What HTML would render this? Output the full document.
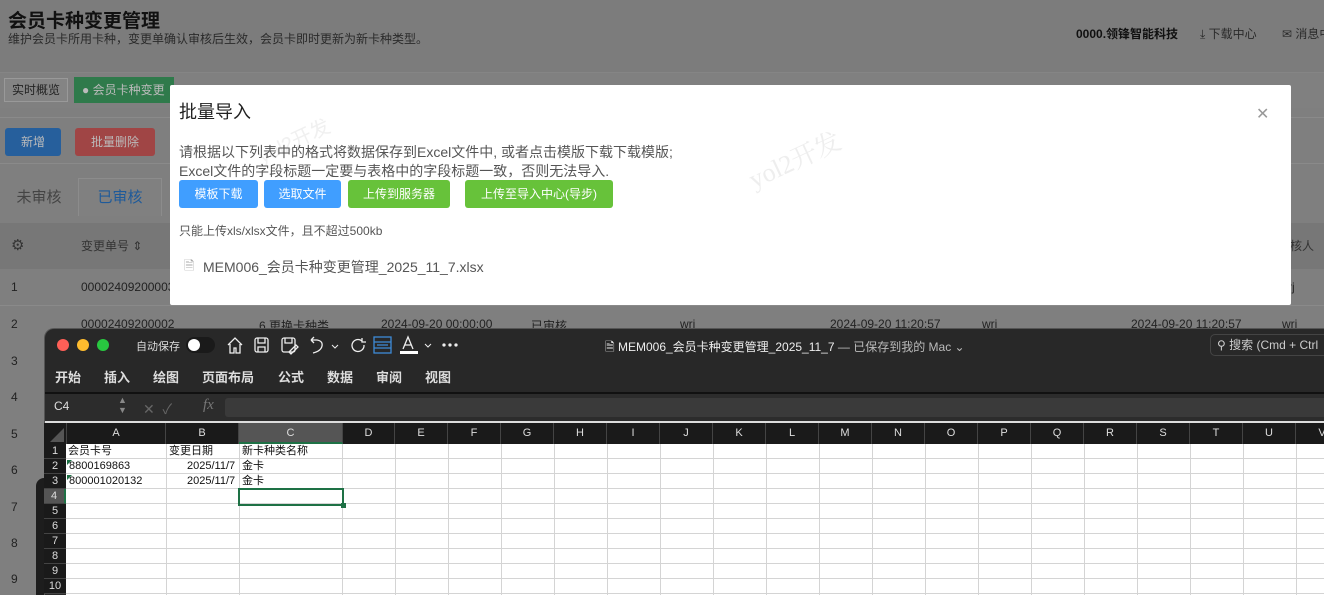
<!DOCTYPE html>
<html><head><meta charset="utf-8"><style>
*{margin:0;padding:0;box-sizing:border-box}
html,body{width:1324px;height:595px;overflow:hidden}
body{background:#7f7f7f;font-family:"Liberation Sans","Noto Sans CJK SC",sans-serif;position:relative;color:#111}
.a{position:absolute;white-space:nowrap}
.btn{position:absolute;color:#fff;font-size:12px;text-align:center;border-radius:3px}
.col{position:absolute;top:423px;height:21px;border-right:1px solid #444;color:#ddd;font-size:11px;text-align:center;line-height:21px}
.rh{position:absolute;left:44px;width:22px;height:15px;color:#ddd;font-size:11px;text-align:center;line-height:15px;background:#1a1a1a;border-bottom:1px solid #444}
.c{position:absolute;font-size:11px;line-height:15px;height:15px;color:#111;white-space:nowrap}
</style></head><body>
<!-- header -->
<div class="a" style="left:0;top:0;width:1324px;height:72px;background:#7c7c7c"></div>
<div class="a" style="left:8px;top:6px;font-size:19px;font-weight:bold;color:#111">会员卡种变更管理</div>
<div class="a" style="left:8px;top:30px;font-size:12px;color:#2a2a2a">维护会员卡所用卡种，变更单确认审核后生效，会员卡即时更新为新卡种类型。</div>
<div class="a" style="left:1076px;top:25px;font-size:12px;font-weight:bold;color:#111">0000.领锋智能科技</div>
<div class="a" style="left:1200px;top:25px;font-size:12px;color:#2a2a2a">⤓ 下载中心</div>
<div class="a" style="left:1282px;top:25px;font-size:12px;color:#2a2a2a">✉ 消息中心</div>
<div class="a" style="left:0;top:72px;width:1324px;height:36px;background:#808080;border-top:1px solid #858585"></div>
<div class="a" style="left:4px;top:78px;width:64px;height:24px;border:1px solid #999;background:#848484;font-size:12px;line-height:22px;text-align:center;color:#222">实时概览</div>
<div class="a" style="left:74px;top:77px;width:100px;height:26px;background:#2f7a4b;font-size:12px;line-height:26px;color:#bbb;padding-left:8px">● 会员卡种变更</div>
<div class="btn" style="left:5px;top:128px;width:56px;height:28px;line-height:28px;background:#265f9c;color:#bbb">新增</div>
<div class="btn" style="left:75px;top:128px;width:80px;height:28px;line-height:28px;background:#a04545;color:#bbb">批量删除</div>
<div class="a" style="left:0;top:117px;width:1324px;height:1px;background:#8a8a8a"></div>
<div class="a" style="left:0;top:163px;width:1324px;height:1px;background:#8a8a8a"></div>
<div class="a" style="left:0;top:180px;width:78px;height:36px;font-size:15px;line-height:36px;text-align:center;color:#444">未审核</div>
<div class="a" style="left:78px;top:178px;width:84px;height:38px;border:1px solid #8c8c8c;border-bottom:none;background:#808080;font-size:15px;line-height:38px;text-align:center;color:#1e5a9a">已审核</div>
<div class="a" style="left:0;top:223px;width:1324px;height:46px;background:#777"></div>
<div class="a" style="left:11px;top:236px;font-size:15px;color:#333">⚙</div>
<div class="a" style="left:81px;top:237px;font-size:12px;color:#333">变更单号 ⇕</div>
<div class="a" style="left:1278px;top:237px;font-size:12px;color:#333">审核人</div>
<div class="a" style="left:0;top:305px;width:1324px;height:1px;background:#8a8a8a"></div>
<div class="a" style="left:11px;top:280px;font-size:12px;color:#222">1</div>
<div class="a" style="left:81px;top:280px;font-size:12px;color:#222">00002409200003</div>
<div class="a" style="left:1288px;top:280px;font-size:12px;color:#222">rj</div>
<div class="a" style="left:11px;top:317px;font-size:12px;color:#222">2</div>
<div class="a" style="left:81px;top:317px;font-size:12px;color:#222">00002409200002</div>
<div class="a" style="left:259px;top:317px;font-size:12px;color:#222">6.更换卡种类</div>
<div class="a" style="left:381px;top:317px;font-size:12px;color:#222">2024-09-20 00:00:00</div>
<div class="a" style="left:531px;top:317px;font-size:12px;color:#222">已审核</div>
<div class="a" style="left:680px;top:317px;font-size:12px;color:#222">wri</div>
<div class="a" style="left:830px;top:317px;font-size:12px;color:#222">2024-09-20 11:20:57</div>
<div class="a" style="left:982px;top:317px;font-size:12px;color:#222">wri</div>
<div class="a" style="left:1131px;top:317px;font-size:12px;color:#222">2024-09-20 11:20:57</div>
<div class="a" style="left:1282px;top:317px;font-size:12px;color:#222">wri</div>
<div class="a" style="left:11px;top:354px;font-size:12px;color:#222">3</div>
<div class="a" style="left:11px;top:390px;font-size:12px;color:#222">4</div>
<div class="a" style="left:11px;top:427px;font-size:12px;color:#222">5</div>
<div class="a" style="left:11px;top:463px;font-size:12px;color:#222">6</div>
<div class="a" style="left:11px;top:500px;font-size:12px;color:#222">7</div>
<div class="a" style="left:11px;top:536px;font-size:12px;color:#222">8</div>
<div class="a" style="left:11px;top:572px;font-size:12px;color:#222">9</div>
<!-- modal -->
<div class="a" style="left:170px;top:85px;width:1121px;height:220px;background:#fff;border-radius:2px"></div>
<div class="a" style="left:179px;top:98px;font-size:18px;color:#222">批量导入</div>
<div class="a" style="left:1256px;top:104px;font-size:16px;color:#999">✕</div>
<div class="a" style="left:255px;top:125px;font-size:20px;color:#f0f0f0;transform:rotate(-25deg)">yol2开发</div>
<div class="a" style="left:745px;top:140px;font-size:26px;color:#eee;font-family:'Liberation Serif','Noto Serif CJK SC',serif;transform:rotate(-25deg)">yol2开发</div>
<div class="a" style="left:179px;top:142px;font-size:14px;color:#555">请根据以下列表中的格式将数据保存到Excel文件中, 或者点击模版下载下载模版;</div>
<div class="a" style="left:179px;top:161px;font-size:14px;color:#555">Excel文件的字段标题一定要与表格中的字段标题一致，否则无法导入.</div>
<div class="btn" style="left:179px;top:180px;width:79px;height:28px;line-height:28px;background:#409eff">模板下载</div>
<div class="btn" style="left:264px;top:180px;width:77px;height:28px;line-height:28px;background:#409eff">选取文件</div>
<div class="btn" style="left:348px;top:180px;width:102px;height:28px;line-height:28px;background:#67c23a">上传到服务器</div>
<div class="btn" style="left:465px;top:180px;width:148px;height:28px;line-height:28px;background:#67c23a">上传至导入中心(导步)</div>
<div class="a" style="left:179px;top:222px;font-size:12px;color:#555">只能上传xls/xlsx文件，且不超过500kb</div>
<div class="a" style="left:184px;top:257px;font-size:13px;color:#aaa">🗎</div>
<div class="a" style="left:203px;top:257px;font-size:14px;color:#555">MEM006_会员卡种变更管理_2025_11_7.xlsx</div>
<!-- back window -->
<div class="a" style="left:36px;top:478px;width:30px;height:117px;background:#1d1d1d;border-radius:8px 0 0 0"></div>
<!-- excel -->
<div class="a" style="left:44px;top:328px;width:1290px;height:267px;background:#282828;border-radius:10px 0 0 0;border:1px solid #555;border-bottom:none"></div>
<div class="a" style="left:57px;top:339px;width:12px;height:12px;border-radius:50%;background:#fe5f57"></div>
<div class="a" style="left:77px;top:339px;width:12px;height:12px;border-radius:50%;background:#febc2e"></div>
<div class="a" style="left:97px;top:339px;width:12px;height:12px;border-radius:50%;background:#28c840"></div>
<div class="a" style="left:136px;top:338px;font-size:11px;color:#ddd">自动保存</div>
<div class="a" style="left:186px;top:337px;width:29px;height:16px;border-radius:8px;background:#1a1a1a"></div>
<div class="a" style="left:188px;top:339px;width:12px;height:12px;border-radius:50%;background:#fff"></div>
<svg class="a" style="left:226px;top:335px" width="240" height="22" fill="none" stroke="#eee" stroke-width="1.3">
<path d="M2 10 L9 3 L16 10 M4 9 V18 H8 V13 H10 V18 H14 V9"/>
<rect x="29" y="3" width="13" height="14" rx="2"/><path d="M32 3 V8 H39 V3 M32 17 V12 H39 V17"/>
<rect x="56" y="3" width="13" height="14" rx="2"/><path d="M59 3 V8 H66 V3 M63 17 L70 10 L72 12 L65 19 Z"/>
<path d="M85 5 L91 5 Q97 6 96 11 Q95 16 87 18 M85 5 L88 2 M85 5 L88 8"/>
<path d="M106 10 L109 13 L112 10" stroke-width="1"/>
<path d="M136 6 A6 6 0 1 0 138 10 M136 3 V7 H140"/>
<rect x="148" y="2" width="17" height="16" stroke="#3d8bd8"/><path d="M148 7 H165 M148 13 H165 M151 10 H162" stroke="#3d8bd8"/>
<path d="M177 14 L182 2 L187 14 M179 10 H185"/><rect x="174" y="16" width="18" height="3" fill="#fff" stroke="none"/>
<path d="M199 9 L202 12 L205 9" stroke-width="1"/>
<circle cx="218" cy="10" r="1" fill="#eee"/><circle cx="224" cy="10" r="1" fill="#eee"/><circle cx="230" cy="10" r="1" fill="#eee"/>
</svg>
<div class="a" style="left:605px;top:338px;font-size:12px;color:#eee">🗎 MEM006_会员卡种变更管理_2025_11_7 <span style="color:#bbb">— 已保存到我的 Mac ⌄</span></div>
<div class="a" style="left:1210px;top:334px;width:130px;height:22px;border:1px solid #444;border-radius:5px;font-size:12px;color:#ccc;line-height:20px;padding-left:6px">⚲ 搜索 (Cmd + Ctrl</div>
<div class="a" style="left:55px;top:367px;font-size:13px;font-weight:bold;color:#ddd">开始</div>
<div class="a" style="left:104px;top:367px;font-size:13px;font-weight:bold;color:#ddd">插入</div>
<div class="a" style="left:153px;top:367px;font-size:13px;font-weight:bold;color:#ddd">绘图</div>
<div class="a" style="left:202px;top:367px;font-size:13px;font-weight:bold;color:#ddd">页面布局</div>
<div class="a" style="left:278px;top:367px;font-size:13px;font-weight:bold;color:#ddd">公式</div>
<div class="a" style="left:327px;top:367px;font-size:13px;font-weight:bold;color:#ddd">数据</div>
<div class="a" style="left:376px;top:367px;font-size:13px;font-weight:bold;color:#ddd">审阅</div>
<div class="a" style="left:425px;top:367px;font-size:13px;font-weight:bold;color:#ddd">视图</div>
<div class="a" style="left:45px;top:392px;width:1290px;height:2px;background:#111"></div>
<div class="a" style="left:45px;top:394px;width:1290px;height:27px;background:#2c2c2c"></div>
<div class="a" style="left:54px;top:399px;font-size:12px;color:#ddd">C4</div>
<div class="a" style="left:118px;top:395px;font-size:9px;color:#888;line-height:10px">▲<br>▼</div>
<div class="a" style="left:143px;top:399px;font-size:14px;color:#666">✕ &nbsp;✓</div>
<div class="a" style="left:203px;top:397px;font-size:15px;color:#777;font-style:italic;font-family:'Liberation Serif',serif">fx</div>
<div class="a" style="left:225px;top:398px;width:1110px;height:19px;background:#3a3a3a;border-radius:3px"></div>
<div class="a" style="left:45px;top:421px;width:1290px;height:2px;background:#ddd"></div>
<div class="a" style="left:44px;top:423px;width:1290px;height:21px;background:#1a1a1a"></div>
<svg class="a" style="left:46px;top:426px" width="20" height="17"><path d="M18 2 L18 16 L4 16 Z" fill="#555"/></svg>
<div class="col" style="left:66px;width:100px;border-left:1px solid #444">A</div>
<div class="col" style="left:166px;width:73px">B</div>
<div class="col" style="left:239px;width:104px;background:#555;border-bottom:2px solid #1e7145">C</div>
<div class="col" style="left:343px;width:52px">D</div>
<div class="col" style="left:395px;width:53px">E</div>
<div class="col" style="left:448px;width:53px">F</div>
<div class="col" style="left:501px;width:53px">G</div>
<div class="col" style="left:554px;width:53px">H</div>
<div class="col" style="left:607px;width:53px">I</div>
<div class="col" style="left:660px;width:53px">J</div>
<div class="col" style="left:713px;width:53px">K</div>
<div class="col" style="left:766px;width:53px">L</div>
<div class="col" style="left:819px;width:53px">M</div>
<div class="col" style="left:872px;width:53px">N</div>
<div class="col" style="left:925px;width:53px">O</div>
<div class="col" style="left:978px;width:53px">P</div>
<div class="col" style="left:1031px;width:53px">Q</div>
<div class="col" style="left:1084px;width:53px">R</div>
<div class="col" style="left:1137px;width:53px">S</div>
<div class="col" style="left:1190px;width:53px">T</div>
<div class="col" style="left:1243px;width:53px">U</div>
<div class="col" style="left:1296px;width:53px">V</div>
<!-- grid -->
<div class="a" style="left:66px;top:444px;width:1270px;height:151px;background-color:#fff;
background-image:linear-gradient(#d4d4d4 1px,transparent 1px),linear-gradient(90deg,transparent 52px,#d4d4d4 52px);
background-size:100% 15px,53px 100%;background-position:0 14px,277px 0"></div>
<div class="a" style="left:66px;top:444px;width:277px;height:151px;background-color:#fff;background-image:linear-gradient(#d4d4d4 1px,transparent 1px);background-size:100% 15px;background-position:0 14px;border-right:1px solid #d4d4d4"></div>
<div class="a" style="left:166px;top:444px;width:1px;height:151px;background:#d4d4d4"></div>
<div class="a" style="left:239px;top:444px;width:1px;height:151px;background:#d4d4d4"></div>
<div class="rh" style="top:444px">1</div><div class="rh" style="top:459px">2</div><div class="rh" style="top:474px">3</div>
<div class="rh" style="top:489px;background:#555;border-right:2px solid #1e7145">4</div><div class="rh" style="top:504px">5</div><div class="rh" style="top:519px">6</div>
<div class="rh" style="top:534px">7</div><div class="rh" style="top:549px">8</div><div class="rh" style="top:564px">9</div><div class="rh" style="top:579px">10</div>
<div class="c" style="left:68px;top:444px">会员卡号</div>
<div class="c" style="left:169px;top:444px">变更日期</div>
<div class="c" style="left:242px;top:444px">新卡种类名称</div>
<div class="c" style="left:69px;top:459px">8800169863</div>
<div class="c" style="left:69px;top:474px">800001020132</div>
<div class="c" style="left:187px;top:459px">2025/11/7</div>
<div class="c" style="left:187px;top:474px">2025/11/7</div>
<div class="c" style="left:242px;top:459px">金卡</div>
<div class="c" style="left:242px;top:474px">金卡</div>
<svg class="a" style="left:67px;top:460px" width="6" height="25"><path d="M0 0 H5 L0 5Z M0 15 H5 L0 20Z" fill="#1e7145"/></svg>
<div class="a" style="left:238px;top:488px;width:106px;height:18px;border:2px solid #1e7145"></div>
<div class="a" style="left:341px;top:503px;width:5px;height:5px;background:#1e7145"></div>
</body></html>
